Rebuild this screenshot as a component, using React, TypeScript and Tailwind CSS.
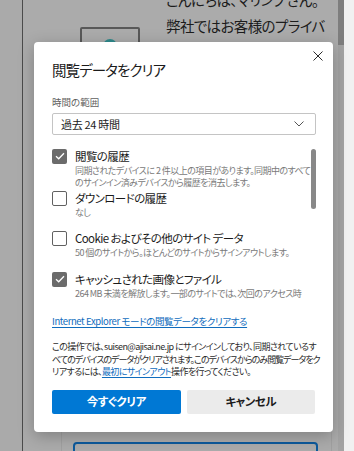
import React from 'react';

const jp = "font-['Noto_Sans_CJK_JP','Noto_Sans',sans-serif] [font-feature-settings:'palt']";

// checkbox used in the list of data types
const Box = ({ checked }: { checked: boolean }) =>
  checked ? (
    <div className="flex h-[15px] w-[15px] shrink-0 items-center justify-center rounded-[2px] bg-[#6b6b6b]">
      <svg width="10" height="8" viewBox="0 0 10 8" fill="none">
        <path d="M1 4.2 L3.7 6.8 L9 1.2" stroke="#fff" strokeWidth="1.3" />
      </svg>
    </div>
  ) : (
    <div className="h-[15px] w-[15px] shrink-0 rounded-[2px] border border-[#616161] bg-white" />
  );

interface ItemProps {
  checked: boolean;
  label: string;
  lines: string[];
  className?: string;
}

const Item = ({ checked, label, lines, className }: ItemProps) => (
  <div className={className}>
    <div className="flex h-[18px] items-center gap-[8px]">
      <Box checked={checked} />
      <span className="text-[11.5px] leading-[18px] tracking-[-0.6px] text-[#1b1b1b] whitespace-nowrap">{label}</span>
    </div>
    <div className="pl-[23px]">
      {lines.map((l, i) => (
        <div key={i} className="text-[9px] leading-[12px] tracking-[-0.55px] text-[#7a7a7a] whitespace-nowrap">
          {l}
        </div>
      ))}
    </div>
  </div>
);

export default function App() {
  return (
    <div className={`relative flex h-[451px] w-[354px] overflow-hidden ${jp}`}>
      {/* dimmed page behind the dialog */}
      <div className="w-[22px] shrink-0 bg-[#aaaaaa]" />
      <div className="flex flex-1 flex-col border-l border-[#4b4b4b] bg-[#ababab]">
        <div className="flex pl-[57px]">
          <div className="relative mt-[27px] h-[60px] w-[60px] shrink-0 rounded-[2px] border-2 border-[#585858]">
            <div className="mx-auto mt-[10px] h-[14px] w-[14px] rounded-full bg-[#2f8a8c]" />
          </div>
          <div className="ml-[26px] mt-[-13px] text-[14.5px] leading-[26px] tracking-[-0.6px] text-[#1c1c1c] whitespace-nowrap">
            <div>こんにちは、マリンフ さん。</div>
            <div>弊社ではお客様のプライバ</div>
          </div>
        </div>
        <div className="ml-[38px] mt-[213px] h-[200px] w-[271px] border-x border-[#a0a0a0] pl-[11px] pt-[142px]">
          <div className="h-[40px] w-[245px] rounded-[4px] border-2 border-[#0d5a9c]" />
        </div>
      </div>
      <div className="w-[6px] shrink-0 bg-[#a3a3a3]">
        <div className="h-[45px] w-full bg-[#7e7e7e]" />
      </div>
      <div className="w-[10px] shrink-0 bg-[#f1f1f1]" />

      {/* dialog */}
      <div className="absolute left-[34px] top-[42px] flex h-[390px] w-[299px] flex-col rounded-[4px] bg-white px-[18px] pt-[18px] shadow-[0_4px_16px_rgba(0,0,0,0.25)]">
        <button className="absolute left-[279px] top-[9px] flex h-[10px] w-[10px] items-center justify-center">
          <svg width="10" height="10" viewBox="0 0 10 10" fill="none">
            <path d="M0.5 0.5 L9.5 9.5 M9.5 0.5 L0.5 9.5" stroke="#2b2b2b" strokeWidth="1" />
          </svg>
        </button>
        <h1 className="text-[14.5px] leading-[20px] tracking-[-0.9px] text-[#1b1b1b]">閲覧データをクリア</h1>
        <div className="mt-[15px] text-[9.5px] leading-[14px] text-[#5f5f5f]">時間の範囲</div>
        <div className="mt-[4px] flex h-[22px] w-[264px] items-center justify-between rounded-[2px] border border-[#c4c4c4] pl-[8px] pr-[11px]">
          <span className="text-[11px] leading-[20px] tracking-[-0.3px] text-[#1b1b1b]">過去 24 時間</span>
          <svg width="10" height="6" viewBox="0 0 10 6" fill="none">
            <path d="M0.5 0.5 L5 5 L9.5 0.5" stroke="#555" strokeWidth="1" />
          </svg>
        </div>

        <div className="relative mt-[12px] h-[153px] w-[264px] overflow-hidden">
          <div className="absolute right-0 top-[2px] h-[60px] w-[5px] rounded-full bg-[#888888]" />
          <Item
            checked
            label="閲覧の履歴"
            lines={[
              '同期されたデバイスに 2 件以上の項目があります。同期中のすべて',
              'のサインイン済みデバイスから履歴を消去します。',
            ]}
          />
          <Item checked={false} label="ダウンロードの履歴" lines={['なし']} className="mb-[10px]" />
          <Item
            checked={false}
            label="Cookie およびその他のサイト データ"
            lines={['50 個のサイトから。ほとんどのサイトからサインアウトします。']}
            className="mb-[11px]"
          />
          <Item
            checked
            label="キャッシュされた画像とファイル"
            lines={[
              '264 MB 未満を解放します。一部のサイトでは、次回のアクセス時',
              'に読み込みが遅くなる可能性があります。',
            ]}
          />
        </div>

        <a className="mt-[15px] w-fit text-[9.5px] leading-[12px] tracking-[-0.4px] text-[#0f6cbd] underline underline-offset-2 whitespace-nowrap">
          Internet Explorer モードの閲覧データをクリアする
        </a>

        <div className="mt-[14px] text-[9px] leading-[12.5px] tracking-[-0.6px] text-[#2b2b2b] whitespace-nowrap">
          <div>この操作では、suisen@ajisai.ne.jp にサインインしており、同期されているす</div>
          <div className="tracking-[-1px]">べてのデバイスのデータがクリアされます。このデバイスからのみ閲覧データをク</div>
          <div>
            リアするには、<span className="text-[#0f6cbd] underline underline-offset-2">最初にサインアウト</span>
            操作を行ってください。
          </div>
        </div>

        <div className="mt-[11px] flex gap-[6px]">
          <button className="h-[24px] w-[129px] rounded-[2px] bg-[#0078d4] text-[11.5px] font-bold tracking-[-0.5px] text-white">
            今すぐクリア
          </button>
          <button className="h-[24px] w-[129px] rounded-[2px] bg-[#ebebeb] text-[11.5px] font-bold tracking-[-0.5px] text-[#1b1b1b]">
            キャンセル
          </button>
        </div>
      </div>
    </div>
  );
}
